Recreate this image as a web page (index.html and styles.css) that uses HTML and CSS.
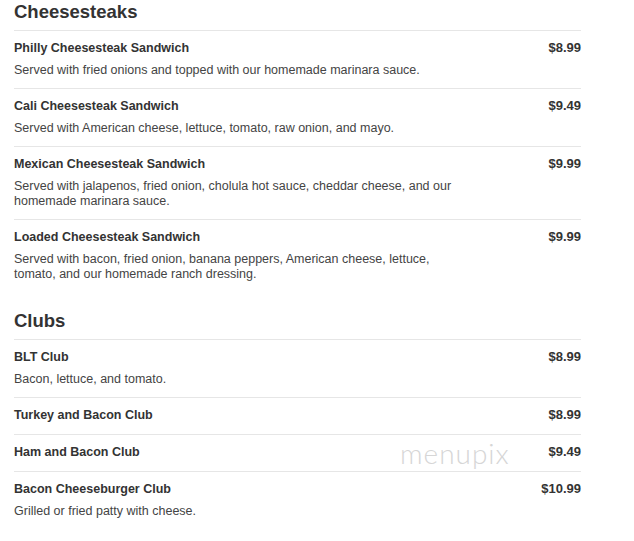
FILE: index.html
```html
<!DOCTYPE html>
<html>
<head>
<meta charset="utf-8">
<link rel="stylesheet" href="styles.css">
</head>
<body>
<div class="menu">
  <section class="section">
    <h2 class="section-title">Cheesesteaks</h2>
    <div class="item">
      <div class="item-main">
        <div class="item-name">Philly Cheesesteak Sandwich</div>
        <div class="item-desc">Served with fried onions and topped with our homemade marinara sauce.</div>
      </div>
      <div class="item-price">$8.99</div>
    </div>
    <div class="item">
      <div class="item-main">
        <div class="item-name">Cali Cheesesteak Sandwich</div>
        <div class="item-desc">Served with American cheese, lettuce, tomato, raw onion, and mayo.</div>
      </div>
      <div class="item-price">$9.49</div>
    </div>
    <div class="item">
      <div class="item-main">
        <div class="item-name">Mexican Cheesesteak Sandwich</div>
        <div class="item-desc">Served with jalapenos, fried onion, cholula hot sauce, cheddar cheese, and our homemade marinara sauce.</div>
      </div>
      <div class="item-price">$9.99</div>
    </div>
    <div class="item">
      <div class="item-main">
        <div class="item-name">Loaded Cheesesteak Sandwich</div>
        <div class="item-desc">Served with bacon, fried onion, banana peppers, American cheese, lettuce, tomato, and our homemade ranch dressing.</div>
      </div>
      <div class="item-price">$9.99</div>
    </div>
  </section>
  <section class="section">
    <h2 class="section-title">Clubs</h2>
    <div class="item">
      <div class="item-main">
        <div class="item-name">BLT Club</div>
        <div class="item-desc">Bacon, lettuce, and tomato.</div>
      </div>
      <div class="item-price">$8.99</div>
    </div>
    <div class="item">
      <div class="item-main">
        <div class="item-name">Turkey and Bacon Club</div>
      </div>
      <div class="item-price">$8.99</div>
    </div>
    <div class="item">
      <div class="item-main">
        <div class="item-name">Ham and Bacon Club</div>
      </div>
      <div class="item-price">$9.49</div>
    </div>
    <div class="item">
      <div class="item-main">
        <div class="item-name">Bacon Cheeseburger Club</div>
        <div class="item-desc">Grilled or fried patty with cheese.</div>
      </div>
      <div class="item-price">$10.99</div>
    </div>
  </section>
  <div class="watermark">menupix</div>
</div>
</body>
</html>
```
FILE: styles.css
```css
html, body {
  margin: 0;
  padding: 0;
  background: #fff;
}
body {
  font-family: "Liberation Sans", Arial, sans-serif;
  color: #333;
}
.menu {
  position: relative;
  width: 567px;
  margin-left: 14px;
}
.section + .section {
  margin-top: 17px;
}
.section-title {
  margin: 0;
  font-size: 18.5px;
  line-height: 24px;
  padding-bottom: 6px;
  font-weight: bold;
  color: #333;
}
.item {
  display: flex;
  justify-content: space-between;
  border-top: 1px solid #e6e6e6;
  padding: 8px 0 10px;
}
.item-main {
  width: 460px;
}
.item-name {
  font-size: 12.5px;
  line-height: 18px;
  font-weight: bold;
  color: #333;
}
.item-desc {
  margin-top: 6px;
  font-size: 12.5px;
  line-height: 15px;
  color: #444;
}
.item-price {
  font-size: 13px;
  line-height: 18px;
  font-weight: bold;
  color: #333;
}
.watermark {
  position: absolute;
  left: 386px;
  top: 436px;
  font-family: "Lato", "DejaVu Sans", sans-serif;
  font-weight: 300;
  font-size: 28px;
  letter-spacing: 1px;
  color: #d6d6d6;
}
```
